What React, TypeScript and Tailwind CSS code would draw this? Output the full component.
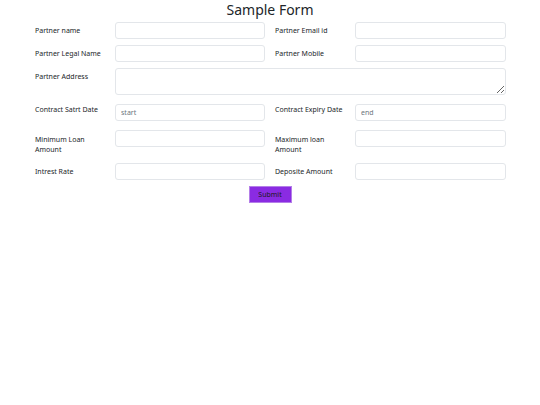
import React from "react";

const font = { fontFamily: '"Noto Sans", "Open Sans", sans-serif' };

function Label({ text, pt = "pt-[4px]" }: { text: string; pt?: string }) {
  return (
    <div className={`w-[80px] shrink-0 text-[7px] leading-[10px] text-[#212529] ${pt} pr-[8px]`}>
      {text}
    </div>
  );
}

function Input({ placeholder, w }: { placeholder?: string; w: string }) {
  return (
    <input
      placeholder={placeholder}
      className={`${w} h-[17px] shrink-0 rounded-[3px] border border-[#e3e6ea] bg-white px-[5px] text-[7px] text-[#212529] placeholder:text-[#6c757d] outline-none`}
      style={font}
    />
  );
}

export default function App() {
  return (
    <div className="min-h-[405px] w-[540px] bg-white" style={font}>
      <div className="h-[22px] text-center text-[14px] leading-[20px] text-[#212529]">Sample Form</div>
      <div className="ml-[35px] w-[471px]">
        <div className="flex h-[17px] items-start">
          <Label text="Partner name" />
          <Input w="w-[150px]" />
          <div className="w-[10px] shrink-0" />
          <Label text="Partner Email id" />
          <Input w="w-[151px]" />
        </div>
        <div className="mt-[6px] flex h-[17px] items-start">
          <Label text="Partner Legal Name" />
          <Input w="w-[150px]" />
          <div className="w-[10px] shrink-0" />
          <Label text="Partner Mobile" />
          <Input w="w-[151px]" />
        </div>
        <div className="mt-[6px] flex h-[27px] items-start">
          <Label text="Partner Address" pt="pt-[4px]" />
          <textarea
            className="block h-[27px] w-[391px] shrink-0 rounded-[3px] border border-[#e3e6ea] bg-white px-[5px] text-[7px] outline-none"
            style={font}
          />
        </div>
        <div className="mt-[9px] flex h-[17px] items-start">
          <Label text="Contract Satrt Date" pt="pt-[1px]" />
          <Input w="w-[150px]" placeholder="start" />
          <div className="w-[10px] shrink-0" />
          <Label text="Contract Expiry Date" pt="pt-[1px]" />
          <Input w="w-[151px]" placeholder="end" />
        </div>
        <div className="mt-[9px] flex h-[17px] items-start">
          <Label text="Minimum Loan Amount" pt="pt-[5px]" />
          <Input w="w-[150px]" />
          <div className="w-[10px] shrink-0" />
          <Label text="Maximum loan Amount" pt="pt-[5px]" />
          <Input w="w-[151px]" />
        </div>
        <div className="mt-[16px] flex h-[17px] items-start">
          <Label text="Intrest Rate" pt="pt-[4px]" />
          <Input w="w-[150px]" />
          <div className="w-[10px] shrink-0" />
          <Label text="Deposite Amount" pt="pt-[4px]" />
          <Input w="w-[151px]" />
        </div>
      </div>
      <div className="mt-[6px] flex justify-center">
        <button
          className="h-[17px] w-[43px] border border-[#b47ee8] bg-[#8a2be2] text-[7px] leading-[15px] text-[#1a1a1a]"
          style={font}
        >
          Submit
        </button>
      </div>
    </div>
  );
}
